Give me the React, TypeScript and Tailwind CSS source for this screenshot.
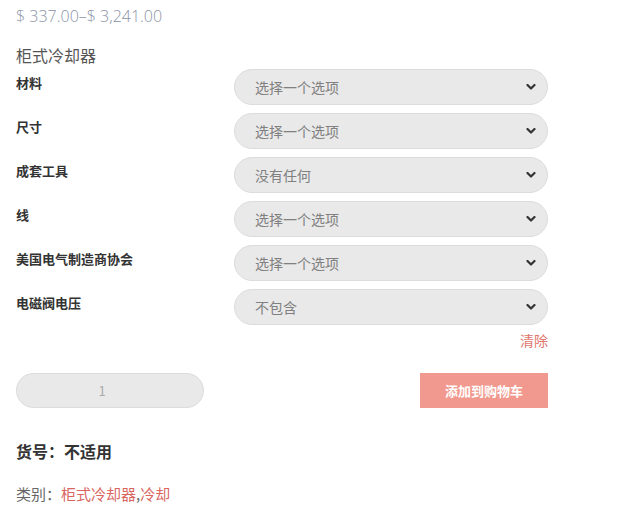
import React from 'react';

const cjk = "font-['Noto_Sans_CJK_SC','Noto_Sans',sans-serif]";

const rows = [
  { label: '材料', value: '选择一个选项' },
  { label: '尺寸', value: '选择一个选项' },
  { label: '成套工具', value: '没有任何' },
  { label: '线', value: '选择一个选项' },
  { label: '美国电气制造商协会', value: '选择一个选项' },
  { label: '电磁阀电压', value: '不包含' },
];

const Chevron = () => (
  <svg width="10" height="7" viewBox="0 0 10 7" className="pointer-events-none absolute right-[12px] top-1/2 -translate-y-1/2">
    <path d="M1.5 1.5 L5 5 L8.5 1.5" fill="none" stroke="#333" strokeWidth="2.2" strokeLinecap="round" strokeLinejoin="round" />
  </svg>
);

const App = () => {
  return (
    <div className={`w-[633px] h-[517px] bg-white px-4 ${cjk}`}>
      <p className="pt-[5px] text-[16px] leading-[22px] font-light text-[#8a93a6] font-['Open_Sans',sans-serif]">
        $ 337.00–$ 3,241.00
      </p>
      <p className="mt-[17px] text-[16px] leading-[22px] text-[#555]">柜式冷却器</p>

      <div className="mt-[3px] flex flex-col gap-2 w-[532px]">
        {rows.map((r) => (
          <div key={r.label} className="flex">
            <div className="w-[218px] pt-[5px] text-[13px] leading-[18px] font-bold text-[#333]">{r.label}</div>
            <div className="relative w-[314px]">
              <select
                defaultValue={r.value}
                className={`appearance-none w-full h-[36px] rounded-full border border-[#dcdcdc] bg-[#e9e9e9] pl-[20px] text-[14px] text-[#808080] outline-none ${cjk}`}
              >
                <option>{r.value}</option>
              </select>
              <Chevron />
            </div>
          </div>
        ))}
      </div>

      <div className="w-[532px] flex justify-end mt-[6px]">
        <span className="text-[14px] leading-[18px] text-[#e0736b]">清除</span>
      </div>

      <div className="w-[532px] flex justify-between items-center mt-[24px]">
        <input
          defaultValue="1"
          className={`w-[188px] h-[35px] rounded-full border border-[#dcdcdc] bg-[#e9e9e9] pr-[16px] text-center text-[13px] text-[#aaa] outline-none ${cjk}`}
        />
        <button className="w-[128px] h-[35px] bg-[#f1998e] text-white text-[13px] font-bold">添加到购物车</button>
      </div>

      <p className="mt-[32px] text-[16px] leading-[22px] font-bold text-[#333]">货号：不适用</p>
      <p className="mt-[22px] text-[15px] leading-[20px] text-[#666]">
        类别：<span className="text-[#d9655f]">柜式冷却器</span>,<span className="text-[#d9655f]">冷却</span>
      </p>
    </div>
  );
};

export default App;
